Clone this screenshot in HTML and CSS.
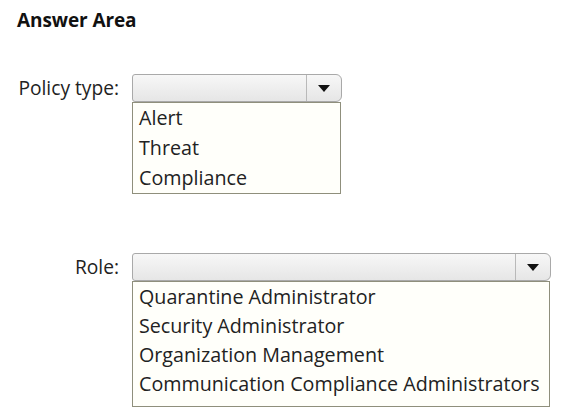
FILE: index.html
```html
<!DOCTYPE html>
<html lang="en">
<head>
  <meta charset="UTF-8" />
  <title>Answer Area</title>
  <meta name="viewport" content="width=device-width, initial-scale=1.0" />
  <link rel="stylesheet" href="styles.css">
</head>
<body>

  <div class="answer-area">
    <h2 class="title">Answer Area</h2>

    <div class="field field-policy">
      <div class="label">Policy type:</div>
      <div class="dropdown dropdown-policy">
        <div class="select">
          <div class="select-value"></div>
          <div class="select-btn"><span class="arrow"></span></div>
        </div>
        <ul class="options">
          <li>Alert</li>
          <li>Threat</li>
          <li>Compliance</li>
        </ul>
      </div>
    </div>

    <div class="field field-role">
      <div class="label">Role:</div>
      <div class="dropdown dropdown-role">
        <div class="select">
          <div class="select-value"></div>
          <div class="select-btn"><span class="arrow"></span></div>
        </div>
        <ul class="options">
          <li>Quarantine Administrator</li>
          <li>Security Administrator</li>
          <li>Organization Management</li>
          <li>Communication Compliance Administrators</li>
        </ul>
      </div>
    </div>
  </div>

</body>
</html>
```

FILE: styles.css
```css
body {
  margin: 0;
  background: #ffffff;
  font-family: 'Open Sans', 'Noto Sans', sans-serif;
  color: #1a1a1a;
}

.answer-area {
  padding: 10px 17px;
}

.title {
  margin: 0;
  font-size: 19px;
  line-height: 21px;
  font-weight: bold;
  color: #111;
  letter-spacing: -0.1px;
}

.field {
  display: flex;
  align-items: flex-start;
  gap: 13px;
}

.field-policy {
  margin-top: 43px;
}

.field-role {
  margin-top: 59px;
}

.label {
  width: 102px;
  text-align: right;
  white-space: nowrap;
  font-size: 19.2px;
  line-height: 28px;
  color: #222;
}

.dropdown-policy {
  width: 210px;
}

.dropdown-role {
  width: 419px;
}

.select {
  display: flex;
  height: 26px;
  border: 1px solid #a9a9a9;
  border-radius: 3px 6px 6px 3px;
  background: linear-gradient(#f7f7f7, #e6e6e6);
}

.select-value {
  flex: 1;
}

.select-btn {
  width: 34px;
  border-left: 1px solid #b9b9b9;
  display: flex;
  align-items: center;
  justify-content: center;
}

.arrow {
  width: 0;
  height: 0;
  border-left: 6px solid transparent;
  border-right: 6px solid transparent;
  border-top: 7px solid #111;
}

.options {
  list-style: none;
  margin: 0 1px 0 0;
  padding: 0 0 0 6px;
  background: #fffffa;
  border: 1px solid #8f8f7c;
}

.options li {
  font-size: 19.7px;
  line-height: 30px;
  color: #222;
}

.dropdown-role .options {
  padding-bottom: 8px;
}

.dropdown-role .options li {
  line-height: 29px;
}
```
